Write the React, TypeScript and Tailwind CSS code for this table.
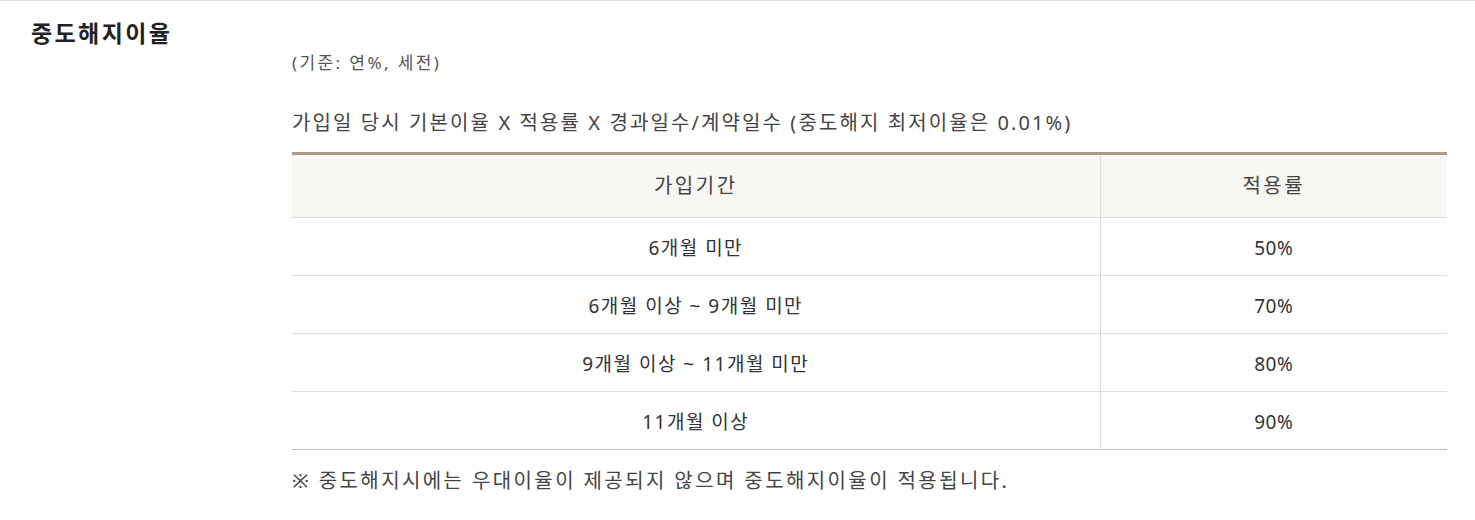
const rows = [
  { period: '6개월 미만', rate: '50%' },
  { period: '6개월 이상 ~ 9개월 미만', rate: '70%' },
  { period: '9개월 이상 ~ 11개월 미만', rate: '80%' },
  { period: '11개월 이상', rate: '90%' },
];

export default function App() {
  return (
    <div
      className="w-[1475px] h-[520px] bg-white text-[#333] border-t border-[#dcdcdc]"
      style={{ fontFamily: '"Noto Sans", "Noto Sans CJK KR", sans-serif' }}
    >
      <div className="flex pt-[14px]">
        <h3 className="w-[292px] shrink-0 pl-[31px] text-[23px] tracking-[2.4px] font-bold leading-[36px] text-[#222]">
          중도해지이율
        </h3>
        <div className="w-[1155px] pt-[34px]">
          <p className="text-[17px] tracking-[2.4px] leading-[28px] text-[#555]">(기준: 연%, 세전)</p>
          <p className="mt-[31px] text-[20px] tracking-[2.1px] leading-[30px] text-[#444]">
            가입일 당시 기본이율 X 적용률 X 경과일수/계약일수 (중도해지 최저이율은 0.01%)
          </p>
          <table className="mt-[14px] w-full border-collapse border-t-[3px] border-t-[#b59a82] text-[19px] tracking-[1.5px]">
            <thead>
              <tr className="bg-[#f9f7f4] h-[64px] border-b border-[#dddddd]">
                <th className="w-[808px] font-normal text-[20px] tracking-[2.5px] text-[#444] border-r border-[#dddddd]">
                  가입기간
                </th>
                <th className="font-normal text-[20px] tracking-[2.5px] text-[#444]">적용률</th>
              </tr>
            </thead>
            <tbody>
              {rows.map((r, i) => (
                <tr
                  key={i}
                  className={`h-[58px] ${i === rows.length - 1 ? 'border-b border-[#bbbbbb]' : 'border-b border-[#dddddd]'}`}
                >
                  <td className="pt-[3px] text-center text-[#333] border-r border-[#dddddd]">{r.period}</td>
                  <td className="pt-[3px] text-center text-[#333] tracking-[0.5px]">{r.rate}</td>
                </tr>
              ))}
            </tbody>
          </table>
          <p className="mt-[16px] text-[20px] tracking-[2.4px] leading-[30px] text-[#444]">
            ※ 중도해지시에는 우대이율이 제공되지 않으며 중도해지이율이 적용됩니다.
          </p>
        </div>
      </div>
    </div>
  );
}
